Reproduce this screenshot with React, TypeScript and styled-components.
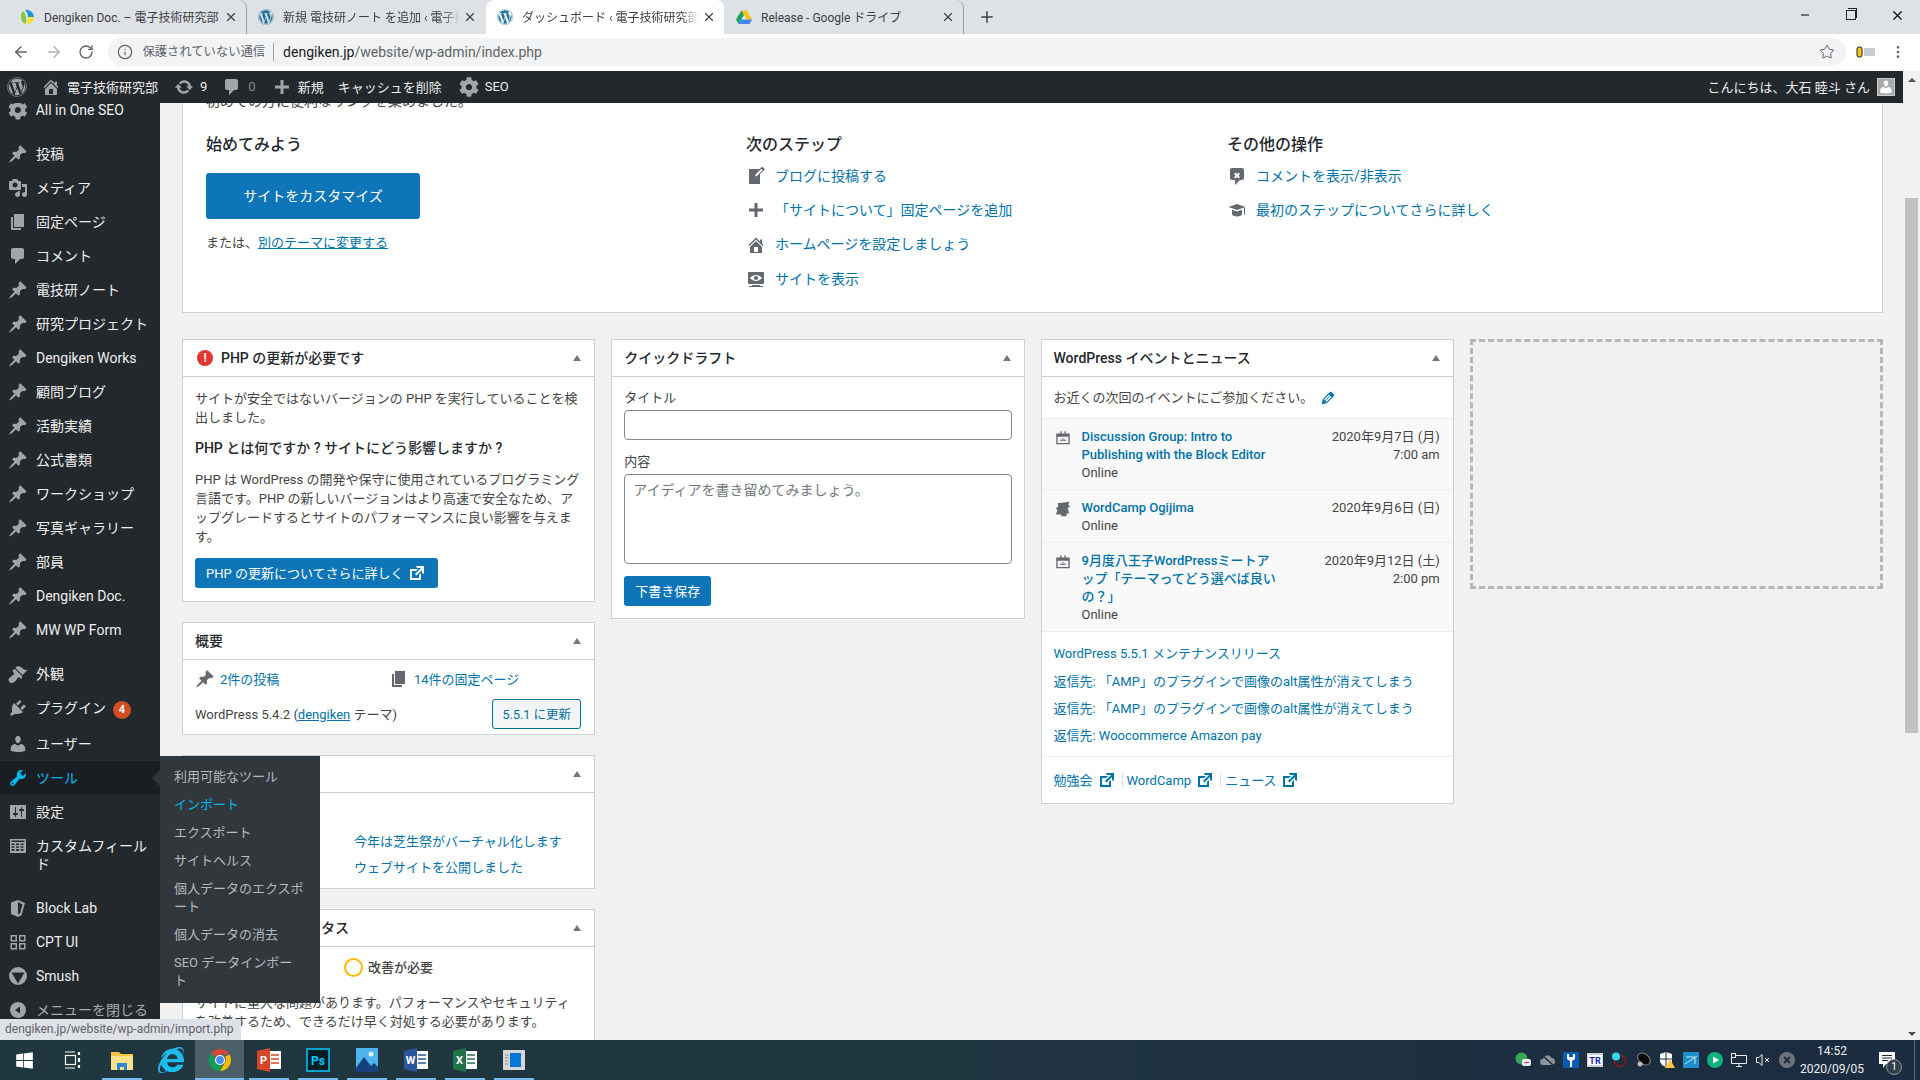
import React from "react";
import styled, { createGlobalStyle } from "styled-components";
import { ArrowLeft, ArrowRight, RotateCw, Star, Info, EllipsisVertical, Minus, X, Plus } from "lucide-react";
import { FaWordpress, FaCog, FaWindows, FaInternetExplorer } from "react-icons/fa";

const GlobalStyle = createGlobalStyle`
  html, body {
    margin: 0;
    padding: 0;
    height: 100%;
    overflow: hidden;
    background: #f1f1f1;
    font-family: Roboto, "Noto Sans CJK JP", sans-serif;
  }
  #root {
    height: 100%;
  }
  * {
    box-sizing: border-box;
  }
`;

const paths = {
  post: "M10.44 3.02l1.82-1.82 6.36 6.35-1.83 1.82c-1.05-.68-2.48-.57-3.41.36l-.75.75c-.92.93-1.04 2.35-.35 3.41l-1.83 1.82-2.41-2.41-2.8 2.79c-.42.42-3.38 2.71-3.8 2.29s1.86-3.39 2.28-3.81l2.79-2.79L4.1 9.36l1.83-1.82c1.05.69 2.48.57 3.41-.36l.75-.75c.93-.92 1.04-2.35.35-3.41z",
  media: "M13 11V4c0-.55-.45-1-1-1h-1.67L9 1H5L3.67 3H2c-.55 0-1 .45-1 1v7c0 .55.45 1 1 1h10c.55 0 1-.45 1-1zM7 4.5c1.38 0 2.5 1.12 2.5 2.5S8.38 9.5 7 9.5 4.5 8.38 4.5 7 5.62 4.5 7 4.5zM14 6h5v10.5c0 1.38-1.12 2.5-2.5 2.5S14 17.88 14 16.5s1.12-2.5 2.5-2.5c.17 0 .34.02.5.05V9h-3V6zm-4 8.05V13h2v3.5c0 1.38-1.12 2.5-2.5 2.5S7 17.88 7 16.5 8.12 14 9.5 14c.17 0 .34.02.5.05z",
  page: "M6 15V2h10v13H6zm-1 1h8v2H3V5h2v11z",
  comment: "M5 2h9c1.1 0 2 .9 2 2v7c0 1.1-.9 2-2 2h-2l-5 5v-5H5c-1.1 0-2-.9-2-2V4c0-1.1.9-2 2-2z",
  brush: "M14.48 11.06L7.41 3.99l1.5-1.5c.5-.56 2.3-.47 3.51.32 1.21.8 1.43 1.28 2.91 2.1 1.18.64 2.45 1.26 4.45.85zm-.71.71L6.7 4.7 4.93 6.47c-.39.39-.39 1.02 0 1.41l1.06 1.06c.39.39.39 1.03 0 1.42-.6.6-1.43 1.11-2.21 1.69-.35.26-.7.53-1.01.84C1.43 13.23.4 14.75.45 16.02c.05 1.27 1.75 2.96 3.02 3.01 1.27.05 2.79-.98 4.13-2.32.31-.31.58-.66.84-1.01.58-.78 1.09-1.61 1.69-2.21.39-.39 1.03-.39 1.42 0l1.06 1.06c.39.39 1.02.39 1.41 0z",
  plugin: "M13.11 4.36L9.87 7.6 8 5.73l3.24-3.24c.35-.34 1.05-.2 1.56.32.52.51.66 1.21.31 1.55zm-8 1.77l.91-1.12 9.01 9.01-1.19.84c-.71.71-2.63 1.16-3.82 1.16H6.14L4.9 17.26c-.59.59-1.54.59-2.12 0-.59-.58-.59-1.53 0-2.12l1.24-1.24v-3.88c0-1.13.4-3.19 1.09-3.89zm7.26 3.97l3.24-3.24c.34-.35 1.04-.21 1.55.31.52.51.66 1.21.31 1.55l-3.24 3.25z",
  users: "M10 9.25c-2.27 0-2.73-3.44-2.73-3.44C7 4.02 7.82 2 9.97 2c2.16 0 2.98 2.02 2.71 3.81 0 0-.41 3.44-2.68 3.44zm0 2.57L12.72 10c2.39 0 4.52 2.33 4.52 4.53v2.49s-3.65 1.13-7.24 1.13c-3.65 0-7.24-1.13-7.24-1.13v-2.49c0-2.25 1.94-4.48 4.47-4.48z",
  tools: "M16.68 9.77c-1.34 1.34-3.3 1.67-4.95.99l-5.41 6.52c-.99.99-2.59.99-3.58 0s-.99-2.59 0-3.57l6.52-5.42c-.68-1.65-.35-3.61.99-4.95 1.28-1.28 3.12-1.62 4.72-1.06l-2.89 2.89 2.82 2.82 2.86-2.87c.53 1.58.18 3.39-1.08 4.65zM3.81 16.21c.4.39 1.04.39 1.43 0 .4-.4.4-1.04 0-1.43-.39-.4-1.03-.4-1.43 0-.39.39-.39 1.03 0 1.43z",
  settings: "M18 16V4c0-.55-.45-1-1-1H3c-.55 0-1 .45-1 1v12c0 .55.45 1 1 1h14c.55 0 1-.45 1-1zM8 11h1c.55 0 1 .45 1 1s-.45 1-1 1H8v1.5c0 .28-.22.5-.5.5s-.5-.22-.5-.5V13H6c-.55 0-1-.45-1-1s.45-1 1-1h1V5.5c0-.28.22-.5.5-.5s.5.22.5.5V11zm5-2h-1c-.55 0-1-.45-1-1s.45-1 1-1h1V5.5c0-.28.22-.5.5-.5s.5.22.5.5V7h1c.55 0 1 .45 1 1s-.45 1-1 1h-1v5.5c0 .28-.22.5-.5.5s-.5-.22-.5-.5V9z",
  home: "M16 8.5l1.53 1.53-1.06 1.06L10 4.62l-6.47 6.47-1.06-1.06L10 2.5l4 4v-2h2v4zm-6-2.46l6 5.99V18H4v-5.97zM12 17v-5H8v5h4z",
  update: "M10.2 3.28c3.53 0 6.43 2.61 6.92 6h2.08l-3.5 4-3.5-4h2.32c-.45-1.97-2.21-3.45-4.32-3.45-1.45 0-2.73.71-3.54 1.78L4.95 5.66C6.23 4.2 8.11 3.28 10.2 3.28zm-.4 13.44c-3.52 0-6.43-2.61-6.92-6H.8l3.5-4c1.17 1.33 2.33 2.67 3.5 4H5.48c.45 1.97 2.21 3.45 4.32 3.45 1.45 0 2.73-.71 3.54-1.78l1.71 1.95c-1.28 1.46-3.15 2.38-5.25 2.38z",
  plus: "M17 8.5v3h-5.5V17h-3v-5.5H3v-3h5.5V3h3v5.5z",
  external: "M9 3h8v8l-2-1V6.92l-5.6 5.59-1.41-1.41L14.08 5H10zm3 12v-3l2-2v7H3V6h8L9 8H5v7h7z",
  edit: "M13.89 3.39l2.71 2.72c.46.46.42 1.24.03 1.64l-8.01 8.02-5.56 1.16 1.16-5.58s7.6-7.63 7.99-8.03c.39-.39 1.22-.39 1.68.07zm-2.73 2.79l-5.59 5.61 1.11 1.11 5.54-5.65zm-2.97 8.23l5.58-5.6-1.07-1.08-5.59 5.6z",
  write: "M16.89 1.2l1.41 1.41c.39.39.39 1.02 0 1.41L14 8.33V18H3V3h10.67l1.8-1.8c.4-.39 1.03-.4 1.42 0zm-5.66 8.48l5.37-5.36-1.42-1.42-5.36 5.37-.71 2.12z",
  view: "M18 14V4c0-.55-.45-1-1-1H3c-.55 0-1 .45-1 1v10c0 .55.45 1 1 1h14c.55 0 1-.45 1-1zm-8-8c2.3 0 4.4 1.14 6 3-1.6 1.86-3.7 3-6 3s-4.4-1.14-6-3c1.6-1.86 3.7-3 6-3zm2 3c0-1.1-.9-2-2-2s-2 .9-2 2 .9 2 2 2 2-.9 2-2zm2 8h3v1H3v-1h3v-1h8v1z",
  toggleComments: "M5 2h10c1.1 0 2 .9 2 2v8c0 1.1-.9 2-2 2h-2l-5 5v-5H5c-1.1 0-2-.9-2-2V4c0-1.1.9-2 2-2zm6.5 4.5L10 8 8.5 6.5 7 8l1.5 1.5L7 11l1.5 1.5L10 11l1.5 1.5L13 11l-1.5-1.5L13 8z",
  learn: "M10 10L1.5 7 10 4l8.5 3zM10 11.5l-5-1.8v4.3c0 1.2 2.2 2.5 5 2.5s5-1.3 5-2.5V9.7zM17 8v6.5h1V7.6z",
  table: "M2 3h16v14H2zm1.5 4.5V9h3V7.5zm0 2.8v1.5h3v-1.5zm0 2.8v1.6h3v-1.6zm4.5-5.6V9h3V7.5zm0 2.8v1.5h3v-1.5zm0 2.8v1.6h3v-1.6zm4.5-5.6V9h3V7.5zm0 2.8v1.5h3v-1.5zm0 2.8v1.6h3v-1.6zM3.5 4.5V6h13V4.5z",
  blocks: "M3 4.5L10 2l7 3-3.5 12.2L10 19l-7-3zM10 4v12.5l2-1 2.5-9z",
  cpt: "M2.5 3h6.5v6.5H2.5zm1.5 1.5V8h3.5V4.5zM11 3h6.5v6.5H11zm1.5 1.5V8h3.5V4.5zM2.5 11H9v6.5H2.5zm1.5 1.5V16h3.5v-3.5zM11 11h6.5v6.5H11zm1.5 1.5V16h3.5v-3.5z",
  smush: "M10 1a9 9 0 1 0 0 18 9 9 0 0 0 0-18zM3.5 6.5h13L10 17.5z",
  collapse: "M10 2a8 8 0 1 0 0 16 8 8 0 0 0 0-16zm2 4.5v7L7 10z",
  meetup: "M7 2.5h1.5V5h3V2.5H13V5h4.5v12h-15V5H7zM4 8.5v7h12v-7zm2.5 3.5h7v1h-7zm2-1.5h3v1h-3z",
  wordcamp: "M4 3.5l13-1.5-1 3.5 2 2-3 1.5 2 6H14v3H8v-2H2l2-5-2-1.5 3-2.5z",
};

type PathName = keyof typeof paths;

const Svg = styled.svg<{ $size?: number; $color?: string }>`
  width: ${(p) => p.$size ?? 20}px;
  height: ${(p) => p.$size ?? 20}px;
  flex: none;
  fill: ${(p) => p.$color ?? "currentColor"};
`;

const Dash = ({ name, size, color }: { name: PathName; size?: number; color?: string }) => (
  <Svg viewBox="0 0 20 20" $size={size} $color={color}>
    <path d={paths[name]} fillRule="evenodd" />
  </Svg>
);

/* ---------- browser chrome ---------- */

const Page = styled.div`
  height: 100%;
  display: flex;
  flex-direction: column;
`;
const TabBar = styled.div`
  height: 34px;
  background: #dee1e6;
  display: flex;
  align-items: stretch;
  padding-left: 8px;
  flex: none;
`;
const Tab = styled.div<{ $active?: boolean; $divider?: boolean }>`
  width: 239px;
  display: flex;
  align-items: center;
  padding: 0 8px 0 11px;
  gap: 9px;
  font-size: 12px;
  color: #3c4043;
  border-radius: 8px 8px 0 0;
  background: ${(p) => (p.$active ? "#fff" : "transparent")};
  border-right: 1px solid ${(p) => (p.$divider ? "#9aa0a6" : "transparent")};
  background-clip: padding-box;
`;
const TabTitle = styled.span<{ $fade?: boolean }>`
  flex: 1;
  white-space: nowrap;
  overflow: hidden;
  margin-bottom: 2px;
  ${(p) => p.$fade && "-webkit-mask-image: linear-gradient(to right, #000 90%, transparent);"}
`;
const TabClose = styled(X).attrs({ size: 14, strokeWidth: 2 })`
  flex: none;
  margin-left: -6px;
  color: #3c4043;
`;
const Favicon = styled.span`
  width: 16px;
  height: 16px;
  flex: none;
  display: flex;
  color: #21759b;
`;
const NewTab = styled.div`
  width: 46px;
  display: flex;
  align-items: center;
  justify-content: center;
  color: #3c4043;
`;
const WindowControls = styled.div`
  margin-left: auto;
  display: flex;
  align-items: center;
  color: #000;
  height: 100%;
`;
const WindowButton = styled.div`
  width: 46px;
  display: flex;
  justify-content: center;
  padding-bottom: 4px;
`;
const RestoreIcon = styled.span`
  width: 10px;
  height: 10px;
  border: 1px solid #202124;
  position: relative;
  &::before {
    content: "";
    position: absolute;
    left: 1px;
    top: -3px;
    width: 8px;
    height: 9px;
    border: 1px solid #202124;
    border-left: 0;
    border-bottom: 0;
  }
`;
const Toolbar = styled.div`
  height: 37px;
  background: #fff;
  display: flex;
  align-items: center;
  padding: 0 6px 2px 5px;
  flex: none;
`;
const NavButton = styled.div<{ $muted?: boolean }>`
  width: 32.5px;
  display: flex;
  justify-content: center;
  color: ${(p) => (p.$muted ? "#b0b3b8" : "#5f6368")};
`;
const Omnibox = styled.div`
  flex: 1;
  height: 28px;
  margin-left: 5px;
  background: #f1f3f4;
  border-radius: 14px;
  display: flex;
  align-items: center;
  padding: 0 11px 0 9px;
  font-size: 14px;
  color: #5f6368;
`;
const SecurityLabel = styled.span`
  margin-left: 10px;
  font-size: 12.3px;
  padding-right: 8px;
  border-right: 1px solid #9aa0a6;
  line-height: 18px;
`;
const UrlHost = styled.span`
  margin-left: 9px;
  color: #202124;
`;
const UrlPath = styled.span`
  color: #5f6368;
`;
const BookmarkStar = styled(Star).attrs({ size: 16, strokeWidth: 1.5 })`
  margin-left: auto;
  color: #5f6368;
`;
const ExtensionIcon = styled.div`
  width: 36px;
  padding-left: 4px;
  display: flex;
  justify-content: center;
`;

/* ---------- wp admin bar ---------- */

const Middle = styled.div`
  flex: 1;
  min-height: 0;
  display: flex;
  position: relative;
`;
const Main = styled.div`
  flex: 1;
  min-width: 0;
  display: flex;
  flex-direction: column;
`;
const AdminBar = styled.div`
  height: 32px;
  flex: none;
  background: #23282d;
  color: #eee;
  font-size: 13px;
  display: flex;
  align-items: center;
`;
const BarItem = styled.div<{ $shift?: number }>`
  display: flex;
  align-items: center;
  gap: 6px;
  padding: 0 7px 2px;
  margin-left: ${(p) => p.$shift ?? 0}px;
  height: 100%;
  white-space: nowrap;
  svg {
    color: #a0a5aa;
    margin-bottom: -2px;
  }
`;
const BarCount = styled.span<{ $dim?: boolean }>`
  color: ${(p) => (p.$dim ? "#82878c" : "#eee")};
`;
const BarRight = styled(BarItem)`
  margin-left: auto;
  padding-right: 8px;
  gap: 7px;
`;
const Avatar = styled.span`
  width: 18px;
  height: 18px;
  background: #a9a9a9;
  border: 1px solid #ccc;
  display: flex;
  margin-bottom: -2px;
  svg {
    color: #fff;
    margin: 0;
  }
`;

/* ---------- sidebar ---------- */

const Body = styled.div`
  flex: 1;
  min-height: 0;
  display: flex;
  overflow: hidden;
`;
const Sidebar = styled.nav`
  width: 160px;
  flex: none;
  background: #23282d;
  color: #eee;
  font-size: 14px;
  line-height: 18px;
  position: relative;
  z-index: 2;
`;
const Menu = styled.ul`
  list-style: none;
  margin: -10px 0 0;
  padding: 0;
`;
const MenuItem = styled.li<{ $current?: boolean; $dim?: boolean; $gap?: boolean }>`
  position: relative;
  display: flex;
  gap: 8px;
  padding: 8px 10px 8px 8px;
  margin-top: ${(p) => (p.$gap ? "10px" : "0")};
  background: ${(p) => (p.$current ? "#191e23" : "transparent")};
  color: ${(p) => (p.$current ? "#00b9eb" : p.$dim ? "#aaa" : "#eee")};
  > svg {
    color: ${(p) => (p.$current ? "#00b9eb" : "#a0a5aa")};
    margin: -1px 0;
  }
`;
const MenuLabel = styled.span`
  width: 116px;
  word-break: break-all;
`;
const Badge = styled.span`
  display: inline-block;
  width: 18px;
  height: 18px;
  border-radius: 50%;
  background: #d54e21;
  color: #fff;
  font-size: 11px;
  font-weight: 600;
  line-height: 18px;
  text-align: center;
  margin-left: 7px;
`;
const Flyout = styled.ul`
  position: absolute;
  left: 160px;
  top: -5px;
  width: 160px;
  margin: 0;
  padding: 7px 0 8px;
  list-style: none;
  background: #32373c;
  font-size: 13px;
  line-height: 18px;
  color: #b4b9be;
  &::before {
    content: "";
    position: absolute;
    left: -8px;
    top: 14px;
    border: 8px solid transparent;
    border-left: 0;
    border-right-color: #32373c;
  }
`;
const FlyoutItem = styled.li<{ $current?: boolean }>`
  padding: 5px 16px 5px 14px;
  color: ${(p) => (p.$current ? "#00b9eb" : "#b4b9be")};
`;

/* ---------- content ---------- */

const Content = styled.main`
  flex: 1;
  min-width: 0;
  padding: 0 20px 0 22px;
  color: #444;
  font-size: 13px;
  line-height: 19px;
`;
const WelcomePanel = styled.section`
  margin-top: -39px;
  background: #fff;
  border: 1px solid #ccd0d4;
  padding: 27px 23px 16px;
`;
const WelcomeIntro = styled.p`
  margin: 0 0 23px;
  font-size: 14px;
  line-height: 18px;
  color: #444;
`;
const WelcomeColumns = styled.div`
  display: grid;
  grid-template-columns: 540px 481px 1fr;
`;
const WelcomeTitle = styled.h3`
  margin: 0;
  font-size: 16px;
  font-weight: 500;
  line-height: 24px;
  color: #23282d;
`;
const HeroButton = styled.div`
  margin-top: 16px;
  width: 214px;
  height: 46px;
  background: #0e76b8;
  border-radius: 3px;
  color: #fff;
  font-size: 14px;
  display: flex;
  align-items: center;
  justify-content: center;
`;
const AltTheme = styled.p`
  margin: 15px 0 0;
  line-height: 18px;
`;
const TextLink = styled.a<{ $under?: boolean }>`
  color: #0073aa;
  text-decoration: ${(p) => (p.$under ? "underline" : "none")};
`;
const StepList = styled.ul`
  list-style: none;
  margin: 2px 0 0;
  padding: 0;
`;
const StepItem = styled.li`
  height: 34.3px;
  display: flex;
  align-items: center;
  gap: 9px;
  font-size: 14px;
  color: #0073aa;
  svg {
    color: #646970;
  }
`;
const WidgetGrid = styled.div`
  margin-top: 26px;
  display: grid;
  grid-template-columns: repeat(4, 1fr);
  gap: 16px;
  align-items: start;
`;
const WidgetStack = styled.div`
  display: flex;
  flex-direction: column;
  gap: 20px;
`;
const Widget = styled.section`
  background: #fff;
  border: 1px solid #ccd0d4;
`;
const WidgetHeader = styled.header`
  height: 37px;
  border-bottom: 1px solid #ccd0d4;
  display: flex;
  align-items: center;
  padding: 0 13px 0 12px;
  gap: 8px;
`;
const WidgetTitle = styled.h2`
  margin: 0;
  flex: 1;
  font-size: 14px;
  font-weight: 500;
  line-height: 19px;
  color: #23282d;
`;
const Collapse = styled.span`
  width: 0;
  height: 0;
  border: 4px solid transparent;
  border-top: 0;
  border-bottom: 6px solid #72777c;
`;
const AlertDot = styled.span`
  width: 16px;
  height: 16px;
  margin-left: 2px;
  border-radius: 50%;
  background: #e3342f;
  color: #fff;
  font-size: 12px;
  font-weight: 700;
  line-height: 16px;
  text-align: center;
`;
const WidgetBody = styled.div`
  padding: 12px 12px 13px;
`;
const HealthBody = styled.div`
  padding: 7px 12px 13px;
`;
const Para = styled.p`
  margin: 0 0 12px;
`;
const SubTitle = styled.h3`
  margin: 0 0 12px;
  font-size: 14px;
  font-weight: 500;
  line-height: 19px;
  color: #23282d;
`;
const PrimaryButton = styled.div`
  display: inline-flex;
  align-items: center;
  gap: 3px;
  height: 30px;
  padding: 0 11px;
  background: #0e76b8;
  border-radius: 3px;
  color: #fff;
`;
const GlanceGrid = styled.div`
  display: grid;
  grid-template-columns: 194px 1fr;
  padding: 9px 12px 0;
`;
const GlanceItem = styled.div`
  display: flex;
  align-items: center;
  gap: 5px;
  color: #0073aa;
  svg {
    color: #646970;
  }
`;
const VersionRow = styled.div`
  display: flex;
  align-items: center;
  justify-content: space-between;
  padding: 10px 4px 5px 12px;
  margin-right: 9px;
`;
const OutlineButton = styled.div`
  width: 89px;
  height: 30px;
  border: 1px solid #0071a1;
  border-radius: 3px;
  background: #f3f5f6;
  color: #0071a1;
  display: flex;
  align-items: center;
  justify-content: center;
  font-size: 12.5px;
`;
const ActivityBody = styled.div`
  padding: 9px 12px 8px;
`;
const ActivityHeading = styled.div`
  line-height: 20px;
  margin-bottom: 6px;
`;
const ActivityRow = styled.div`
  display: grid;
  grid-template-columns: 159px 1fr;
  height: 26px;
  align-items: center;
`;
const HealthRow = styled.div`
  display: flex;
  justify-content: center;
  align-items: center;
  gap: 5px;
  height: 26px;
  color: #444;
  font-weight: 500;
  margin: 0 0 13px 0;
`;
const HealthRing = styled.span`
  width: 19px;
  height: 19px;
  border-radius: 50%;
  border: 2px solid #ffb900;
`;
const FieldLabel = styled.label`
  display: block;
  line-height: 19px;
`;
const TitleInput = styled.div`
  height: 30px;
  margin: 3px 0 12px;
  border: 1px solid #7e8993;
  border-radius: 4px;
  background: #fff;
`;
const DraftArea = styled.div`
  height: 90px;
  margin: 3px 0 12px;
  padding: 6px 8px;
  border: 1px solid #7e8993;
  border-radius: 4px;
  font-size: 14px;
  color: #72777c;
`;
const DraftBody = styled.div`
  padding: 11px 12px 12px;
`;
const Location = styled.div`
  height: 42px;
  display: flex;
  align-items: center;
  gap: 6px;
  padding-left: 12px;
  border-bottom: 1px solid #eee;
`;
const EventRow = styled.div`
  display: flex;
  padding: 9px 13px 7px 12px;
  background: #f9f9f9;
  border-bottom: 1px solid #eee;
  line-height: 18px;
  svg {
    color: #646970;
    margin: 1px 10px 0 0;
  }
`;
const EventText = styled.div`
  width: 198px;
  flex: none;
  color: #444;
`;
const EventTitle = styled.a`
  display: block;
  color: #0073aa;
  font-weight: 500;
`;
const EventDate = styled.div`
  flex: 1;
  text-align: right;
  white-space: nowrap;
`;
const NewsList = styled.ul`
  list-style: none;
  margin: 0;
  padding: 8px 12px 7px;
  border-bottom: 1px solid #eee;
  color: #0073aa;
`;
const NewsItem = styled.li`
  height: 27.3px;
  display: flex;
  align-items: center;
`;
const EventFooter = styled.div`
  height: 46px;
  padding-left: 12px;
  display: flex;
  align-items: center;
  color: #0073aa;
`;
const FooterLink = styled.span`
  display: flex;
  align-items: center;
  gap: 4px;
`;
const FooterDivider = styled.span`
  width: 1px;
  height: 14px;
  background: #ddd;
  margin: 0 4px 0 5px;
`;
const DropZone = styled.div`
  height: 250px;
  border: 3px dashed #b4b9be;
`;

/* ---------- scrollbar, status bubble ---------- */

const ScrollTrack = styled.div`
  width: 17px;
  flex: none;
  background: #f1f1f1;
  display: flex;
  flex-direction: column;
  align-items: center;
  justify-content: space-between;
  padding: 7px 0 4px;
`;
const ScrollArrow = styled.span<{ $down?: boolean }>`
  width: 0;
  height: 0;
  border: 4px solid transparent;
  ${(p) => (p.$down ? "border-bottom: 0; border-top: 4px solid #505050;" : "border-top: 0; border-bottom: 4px solid #505050;")}
`;
const ScrollThumb = styled.div`
  width: 13px;
  height: 535px;
  background: #c1c1c1;
  margin: 116px 0 auto;
`;
const StatusBubble = styled.div`
  position: absolute;
  left: 0;
  bottom: 0;
  z-index: 5;
  height: 21px;
  padding: 0 7px 0 5px;
  background: #dee1e6;
  border-top-right-radius: 2px;
  color: #5f6368;
  font-size: 12px;
  line-height: 21px;
`;

/* ---------- taskbar ---------- */

const Taskbar = styled.footer`
  height: 40px;
  flex: none;
  background: linear-gradient(to right, #20373f, #1f3540 50%, #1b2b40);
  display: flex;
  align-items: stretch;
  color: #fff;
`;
const StartCell = styled.div`
  width: 48.5px;
  display: flex;
  align-items: center;
  justify-content: center;
`;
const AppCell = styled.div<{ $active?: boolean; $open?: boolean }>`
  width: 49px;
  display: flex;
  align-items: center;
  justify-content: center;
  position: relative;
  background: ${(p) => (p.$active ? "#4a5f66" : "transparent")};
  &::after {
    content: "";
    display: ${(p) => (p.$open ? "block" : "none")};
    position: absolute;
    bottom: 0;
    left: ${(p) => (p.$active ? "0" : "5px")};
    right: ${(p) => (p.$active ? "0" : "4px")};
    height: 2px;
    background: #76b9ed;
  }
`;
const Tray = styled.div`
  margin-left: auto;
  display: flex;
  align-items: center;
  padding-right: 5px;
`;
const TrayCell = styled.div`
  width: 24px;
  display: flex;
  justify-content: center;
  color: #ddd;
`;
const Clock = styled.div`
  width: 66px;
  text-align: center;
  font-size: 12px;
  line-height: 18px;
  color: #eee;
`;
const Notify = styled.div`
  width: 50px;
  padding-right: 6px;
  display: flex;
  justify-content: center;
  border-right: 1px solid #5a6a78;
  height: 100%;
  align-items: center;
  position: relative;
`;
const NotifyBadge = styled.span`
  position: absolute;
  left: 21px;
  top: 19px;
  width: 16px;
  height: 16px;
  border-radius: 50%;
  background: #33404c;
  border: 1px solid #8a939b;
  font-size: 10px;
  line-height: 14px;
  text-align: center;
`;

/* ---------- drawn logos ---------- */

const DocFavicon = () => (
  <svg viewBox="0 0 16 16" width="16" height="16">
    <path d="M6 1a7.5 7.5 0 0 1 9 7H9C9 5 8 3 6 1z" fill="#1b9ad6" />
    <path d="M9 8h6a7.5 7.5 0 0 1-8 7.5C9 13 9.5 10.5 9 8z" fill="#f5e13a" />
    <path d="M4 2C1 5 1 12 6 15c1-1 2-3 1-7-.5-2-1.5-4.5-3-6z" fill="#8cc63f" />
  </svg>
);
const DriveFavicon = () => (
  <svg viewBox="0 0 16 16" width="16" height="16">
    <path d="M5.5 1.5h5L16 10.5h-5z" fill="#ffc107" />
    <path d="M5.5 1.5L0 10.5 2.5 15l5.5-9z" fill="#1ea362" />
    <path d="M2.5 15h11l2.5-4.5H5z" fill="#4285f4" />
  </svg>
);
const ChromeLogo = () => (
  <svg viewBox="0 0 24 24" width="24" height="24">
    <path d="M12 1a11 11 0 0 1 9.5 5.5H12a5.5 5.5 0 0 0-5 3.2L3.5 4.7A11 11 0 0 1 12 1z" fill="#db4437" />
    <path d="M21.5 6.5A11 11 0 0 1 12 23l4.7-8.2A5.5 5.5 0 0 0 17 8.5z" fill="#fbbc05" />
    <path d="M12 23A11 11 0 0 1 3.5 4.7L8 12.8a5.5 5.5 0 0 0 6.2 2.9z" fill="#0f9d58" />
    <circle cx="12" cy="12" r="4.5" fill="#4a8cf0" stroke="#fff" strokeWidth="1.2" />
  </svg>
);
const FolderLogo = () => (
  <svg viewBox="0 0 24 24" width="24" height="24">
    <path d="M1 4h8l2 2h12v16H1z" fill="#f4c542" />
    <path d="M1 8h22v14H1z" fill="#fbe08a" />
    <path d="M7 15h10v7h-3v-3h-4v3H7z" fill="#2b88d8" />
  </svg>
);
const OfficeLogo = ({ letter, dark }: { letter: string; dark: string }) => (
  <svg viewBox="0 0 24 24" width="24" height="24">
    <rect x="10" y="3" width="14" height="18" fill="#fff" />
    <path d="M14 7h8M14 11h8M14 15h8" stroke={dark} strokeWidth="1.5" />
    <path d="M0 3l13-3v24L0 21z" fill={dark} />
    <text x="6.5" y="16" textAnchor="middle" fontSize="11" fontWeight="700" fill="#fff" fontFamily="Roboto">
      {letter}
    </text>
  </svg>
);
const PsLogo = () => (
  <svg viewBox="0 0 24 24" width="24" height="24">
    <rect x="1" y="1" width="22" height="22" fill="#001d26" stroke="#00c8ff" strokeWidth="1.5" />
    <text x="12" y="17" textAnchor="middle" fontSize="12" fontWeight="700" fill="#00c8ff" fontFamily="Roboto">
      Ps
    </text>
  </svg>
);
const PhotosLogo = () => (
  <svg viewBox="0 0 24 24" width="24" height="24">
    <rect x="1" y="0" width="22" height="24" fill="#4fb3ee" />
    <circle cx="16" cy="6" r="2.5" fill="#d9f1ff" />
    <path d="M1 20l8-11 7 9 3-3 4 4v5H1z" fill="#16407e" />
  </svg>
);
const PanelLogo = () => (
  <svg viewBox="0 0 24 24" width="24" height="24">
    <rect x="1" y="2" width="22" height="20" fill="#d6d6d6" />
    <rect x="8" y="5" width="11" height="14" fill="#0078d7" />
    <path d="M3 7h3M3 10h3M3 13h3M3 16h3" stroke="#8a8a8a" />
  </svg>
);
const TaskView = () => (
  <svg viewBox="0 0 20 20" width="20" height="20" fill="none" stroke="#fff" strokeWidth="1.2">
    <path d="M2 2h10M2 18h10" />
    <rect x="2.5" y="5.5" width="10" height="9" />
    <path d="M16 2v3M16 8v4M16 15v3" strokeWidth="2.2" />
  </svg>
);

const TrayIcons = [
  <svg key="globe" viewBox="0 0 16 16" width="16" height="16"><circle cx="6.5" cy="6.5" r="6" fill="#3aa655" /><rect x="7" y="7" width="9" height="7" rx="2" fill="#e8eef5" /><path d="M9 10.5h5" stroke="#e04040" /></svg>,
  <svg key="cloud" viewBox="0 0 16 16" width="16" height="16"><path d="M4 13a3 3 0 0 1 0-6 4.5 4.5 0 0 1 8.5-1A3.5 3.5 0 0 1 12.5 13z" fill="#8c939a" /><path d="M3 3l11 10" stroke="#1b2b40" strokeWidth="1.5" /></svg>,
  <svg key="tool" viewBox="0 0 16 16" width="16" height="16"><rect width="16" height="16" fill="#0a5bb5" /><path d="M4 2v5l3 2v6h2V9l3-2V2h-2v3H6V2z" fill="#fff" /></svg>,
  <svg key="tr" viewBox="0 0 16 16" width="16" height="16"><rect width="16" height="14" y="1" fill="#d0d0d0" /><rect x="1" y="3" width="14" height="10" fill="#fff" /><text x="8" y="11.5" textAnchor="middle" fontSize="9" fontWeight="700" fill="#1420c8" fontFamily="Roboto">TR</text></svg>,
  <svg key="pair" viewBox="0 0 16 16" width="16" height="16"><circle cx="9" cy="9" r="5.5" fill="none" stroke="#8f1616" strokeWidth="1.5" /><circle cx="5" cy="4.5" r="4" fill="#35d6e8" /></svg>,
  <svg key="dish" viewBox="0 0 16 16" width="16" height="16"><ellipse cx="9" cy="7" rx="7" ry="5" transform="rotate(40 9 7)" fill="#0a0a0a" stroke="#888" /><circle cx="5" cy="12" r="2.5" fill="#bbb" /></svg>,
  <svg key="shield" viewBox="0 0 16 16" width="16" height="16"><path d="M7 0l6 2v6c0 4-3 6-6 7-3-1-6-3-6-7V2z" fill="#fff" /><path d="M7 0v15M1 7h12" stroke="#1b2b40" /><path d="M11 7l5 9H6z" fill="#ffc83d" /></svg>,
  <svg key="panel" viewBox="0 0 16 16" width="16" height="16"><rect width="16" height="16" rx="1" fill="#1f8fc7" /><path d="M2 12L14 4M3 5h9v7" stroke="#bfe6f5" fill="none" /></svg>,
  <svg key="play" viewBox="0 0 16 16" width="16" height="16"><circle cx="8" cy="8" r="8" fill="#10b27c" /><path d="M6 4.5L12 8l-6 3.5z" fill="#fff" /></svg>,
  <svg key="net" viewBox="0 0 16 16" width="16" height="16" fill="none" stroke="#eee"><rect x=".5" y="1.5" width="4" height="4" /><path d="M4.5 3.5H15.5V11.5H.5V5.5M8 11.5v3M5 14.5h6" /></svg>,
  <svg key="mute" viewBox="0 0 16 16" width="16" height="16" fill="none" stroke="#eee"><path d="M1.5 5.5H4l3-3v11l-3-3H1.5zM10 6l4 4M14 6l-4 4" /></svg>,
  <svg key="off" viewBox="0 0 16 16" width="16" height="16"><circle cx="8" cy="8" r="8" fill="#6d737a" /><path d="M5 5l6 6M11 5l-6 6" stroke="#1b2b40" strokeWidth="2" /></svg>,
];

/* ---------- data ---------- */

const menuTop: { icon: PathName; label: string; gap?: boolean }[] = [
  { icon: "post", label: "投稿", gap: true },
  { icon: "media", label: "メディア" },
  { icon: "page", label: "固定ページ" },
  { icon: "comment", label: "コメント" },
  { icon: "post", label: "電技研ノート" },
  { icon: "post", label: "研究プロジェクト" },
  { icon: "post", label: "Dengiken Works" },
  { icon: "post", label: "顧問ブログ" },
  { icon: "post", label: "活動実績" },
  { icon: "post", label: "公式書類" },
  { icon: "post", label: "ワークショップ" },
  { icon: "post", label: "写真ギャラリー" },
  { icon: "post", label: "部員" },
  { icon: "post", label: "Dengiken Doc." },
  { icon: "post", label: "MW WP Form" },
];

const flyoutItems = [
  "利用可能なツール",
  "インポート",
  "エクスポート",
  "サイトヘルス",
  "個人データのエクスポート",
  "個人データの消去",
  "SEO データインポート",
];

const nextSteps: { icon: PathName; label: string }[] = [
  { icon: "write", label: "ブログに投稿する" },
  { icon: "plus", label: "「サイトについて」固定ページを追加" },
  { icon: "home", label: "ホームページを設定しましょう" },
  { icon: "view", label: "サイトを表示" },
];

const moreActions: { icon: PathName; label: string }[] = [
  { icon: "toggleComments", label: "コメントを表示/非表示" },
  { icon: "learn", label: "最初のステップについてさらに詳しく" },
];

const events: { icon: PathName; title: string; date: string; time?: string }[] = [
  { icon: "meetup", title: "Discussion Group: Intro to Publishing with the Block Editor", date: "2020年9月7日 (月)", time: "7:00 am" },
  { icon: "wordcamp", title: "WordCamp Ogijima", date: "2020年9月6日 (日)" },
  { icon: "meetup", title: "9月度八王子WordPressミートアップ「テーマってどう選べば良いの？」", date: "2020年9月12日 (土)", time: "2:00 pm" },
];

const news = [
  "WordPress 5.5.1 メンテナンスリリース",
  "返信先: 「AMP」のプラグインで画像のalt属性が消えてしまう",
  "返信先: 「AMP」のプラグインで画像のalt属性が消えてしまう",
  "返信先: Woocommerce Amazon pay",
];

const App = () => {
  return (
    <Page>
      <GlobalStyle />
      <TabBar>
        <Tab $divider>
          <Favicon><DocFavicon /></Favicon>
          <TabTitle>Dengiken Doc. – 電子技術研究部</TabTitle>
          <TabClose />
        </Tab>
        <Tab>
          <Favicon><FaWordpress size={16} /></Favicon>
          <TabTitle $fade>新規 電技研ノート を追加 ‹ 電子技術研究部</TabTitle>
          <TabClose />
        </Tab>
        <Tab $active>
          <Favicon><FaWordpress size={16} /></Favicon>
          <TabTitle $fade>ダッシュボード ‹ 電子技術研究部 — WordPress</TabTitle>
          <TabClose />
        </Tab>
        <Tab $divider>
          <Favicon><DriveFavicon /></Favicon>
          <TabTitle>Release - Google ドライブ</TabTitle>
          <TabClose />
        </Tab>
        <NewTab><Plus size={18} strokeWidth={2} /></NewTab>
        <WindowControls>
          <WindowButton><Minus size={12} strokeWidth={2.4} /></WindowButton>
          <WindowButton><RestoreIcon /></WindowButton>
          <WindowButton><X size={15} strokeWidth={1.8} /></WindowButton>
        </WindowControls>
      </TabBar>

      <Toolbar>
        <NavButton><ArrowLeft size={18} strokeWidth={2} /></NavButton>
        <NavButton $muted><ArrowRight size={18} strokeWidth={2} /></NavButton>
        <NavButton><RotateCw size={16} strokeWidth={2} /></NavButton>
        <Omnibox>
          <Info size={16} strokeWidth={1.8} />
          <SecurityLabel>保護されていない通信</SecurityLabel>
          <UrlHost>
            dengiken.jp<UrlPath>/website/wp-admin/index.php</UrlPath>
          </UrlHost>
          <BookmarkStar />
        </Omnibox>
        <ExtensionIcon>
          <svg viewBox="0 0 20 12" width="20" height="12">
            <rect x="1" y="1" width="5" height="10" rx="2" fill="#f5c518" stroke="#222" />
            <rect x="8" y="2" width="11" height="8" fill="#c6cdd3" />
          </svg>
        </ExtensionIcon>
        <NavButton><EllipsisVertical size={16} /></NavButton>
      </Toolbar>

      <Middle>
        <Main>
          <AdminBar>
            <BarItem><FaWordpress size={20} /></BarItem>
            <BarItem><Dash name="home" />電子技術研究部</BarItem>
            <BarItem $shift={2}><Dash name="update" /><BarCount>9</BarCount></BarItem>
            <BarItem $shift={1}><Dash name="comment" /><BarCount $dim>0</BarCount></BarItem>
            <BarItem $shift={2}><Dash name="plus" />新規</BarItem>
            <BarItem>キャッシュを削除</BarItem>
            <BarItem $shift={3}><FaCog size={20} />SEO</BarItem>
            <BarRight>
              こんにちは、大石 睦斗 さん
              <Avatar><Dash name="users" size={16} /></Avatar>
            </BarRight>
          </AdminBar>

          <Body>
            <Sidebar>
              <Menu>
                <MenuItem>
                  <FaCog size={20} />
                  <MenuLabel>All in One SEO</MenuLabel>
                </MenuItem>
                {menuTop.map((item) => (
                  <MenuItem key={item.label} $gap={item.gap}>
                    <Dash name={item.icon} />
                    <MenuLabel>{item.label}</MenuLabel>
                  </MenuItem>
                ))}
                <MenuItem $gap>
                  <Dash name="brush" />
                  <MenuLabel>外観</MenuLabel>
                </MenuItem>
                <MenuItem>
                  <Dash name="plugin" />
                  <MenuLabel>プラグイン<Badge>4</Badge></MenuLabel>
                </MenuItem>
                <MenuItem>
                  <Dash name="users" />
                  <MenuLabel>ユーザー</MenuLabel>
                </MenuItem>
                <MenuItem $current>
                  <Dash name="tools" />
                  <MenuLabel>ツール</MenuLabel>
                  <Flyout>
                    {flyoutItems.map((label) => (
                      <FlyoutItem key={label} $current={label === "インポート"}>{label}</FlyoutItem>
                    ))}
                  </Flyout>
                </MenuItem>
                <MenuItem>
                  <Dash name="settings" />
                  <MenuLabel>設定</MenuLabel>
                </MenuItem>
                <MenuItem>
                  <Dash name="table" />
                  <MenuLabel>カスタムフィールド</MenuLabel>
                </MenuItem>
                <MenuItem $gap>
                  <Dash name="blocks" />
                  <MenuLabel>Block Lab</MenuLabel>
                </MenuItem>
                <MenuItem>
                  <Dash name="cpt" />
                  <MenuLabel>CPT UI</MenuLabel>
                </MenuItem>
                <MenuItem>
                  <Dash name="smush" />
                  <MenuLabel>Smush</MenuLabel>
                </MenuItem>
                <MenuItem $dim>
                  <Dash name="collapse" />
                  <MenuLabel>メニューを閉じる</MenuLabel>
                </MenuItem>
              </Menu>
            </Sidebar>

            <Content>
              <WelcomePanel>
                <WelcomeIntro>初めての方に便利なリンクを集めました。</WelcomeIntro>
                <WelcomeColumns>
                  <div>
                    <WelcomeTitle>始めてみよう</WelcomeTitle>
                    <HeroButton>サイトをカスタマイズ</HeroButton>
                    <AltTheme>または、<TextLink $under>別のテーマに変更する</TextLink></AltTheme>
                  </div>
                  <div>
                    <WelcomeTitle>次のステップ</WelcomeTitle>
                    <StepList>
                      {nextSteps.map((s) => (
                        <StepItem key={s.label}><Dash name={s.icon} />{s.label}</StepItem>
                      ))}
                    </StepList>
                  </div>
                  <div>
                    <WelcomeTitle>その他の操作</WelcomeTitle>
                    <StepList>
                      {moreActions.map((s) => (
                        <StepItem key={s.label}><Dash name={s.icon} />{s.label}</StepItem>
                      ))}
                    </StepList>
                  </div>
                </WelcomeColumns>
              </WelcomePanel>

              <WidgetGrid>
                <WidgetStack>
                  <Widget>
                    <WidgetHeader>
                      <AlertDot>!</AlertDot>
                      <WidgetTitle>PHP の更新が必要です</WidgetTitle>
                      <Collapse />
                    </WidgetHeader>
                    <WidgetBody>
                      <Para>サイトが安全ではないバージョンの PHP を実行していることを検出しました。</Para>
                      <SubTitle>PHP とは何ですか ? サイトにどう影響しますか ?</SubTitle>
                      <Para>PHP は WordPress の開発や保守に使用されているプログラミング言語です。PHP の新しいバージョンはより高速で安全なため、アップグレードするとサイトのパフォーマンスに良い影響を与えます。</Para>
                      <PrimaryButton>PHP の更新についてさらに詳しく <Dash name="external" size={20} /></PrimaryButton>
                    </WidgetBody>
                  </Widget>

                  <Widget>
                    <WidgetHeader>
                      <WidgetTitle>概要</WidgetTitle>
                      <Collapse />
                    </WidgetHeader>
                    <GlanceGrid>
                      <GlanceItem><Dash name="post" />2件の投稿</GlanceItem>
                      <GlanceItem><Dash name="page" />14件の固定ページ</GlanceItem>
                    </GlanceGrid>
                    <VersionRow>
                      <span>WordPress 5.4.2 (<TextLink $under>dengiken</TextLink> テーマ)</span>
                      <OutlineButton>5.5.1 に更新</OutlineButton>
                    </VersionRow>
                  </Widget>

                  <Widget>
                    <WidgetHeader>
                      <WidgetTitle>アクティビティ</WidgetTitle>
                      <Collapse />
                    </WidgetHeader>
                    <ActivityBody>
                      <ActivityHeading>最近公開</ActivityHeading>
                      <ActivityRow><span>8月25日 10:00 AM</span><TextLink>今年は芝生祭がバーチャル化します</TextLink></ActivityRow>
                      <ActivityRow><span>8月10日 9:00 AM</span><TextLink>ウェブサイトを公開しました</TextLink></ActivityRow>
                    </ActivityBody>
                  </Widget>

                  <Widget>
                    <WidgetHeader>
                      <WidgetTitle>サイトヘルスステータス</WidgetTitle>
                      <Collapse />
                    </WidgetHeader>
                    <HealthBody>
                      <HealthRow><HealthRing />改善が必要</HealthRow>
                      サイトに重大な問題があります。パフォーマンスやセキュリティを改善するため、できるだけ早く対処する必要があります。
                    </HealthBody>
                  </Widget>
                </WidgetStack>

                <Widget>
                  <WidgetHeader>
                    <WidgetTitle>クイックドラフト</WidgetTitle>
                    <Collapse />
                  </WidgetHeader>
                  <DraftBody>
                    <FieldLabel>タイトル</FieldLabel>
                    <TitleInput />
                    <FieldLabel>内容</FieldLabel>
                    <DraftArea>アイディアを書き留めてみましょう。</DraftArea>
                    <PrimaryButton>下書き保存</PrimaryButton>
                  </DraftBody>
                </Widget>

                <Widget>
                  <WidgetHeader>
                    <WidgetTitle>WordPress イベントとニュース</WidgetTitle>
                    <Collapse />
                  </WidgetHeader>
                  <Location>
                    お近くの次回のイベントにご参加ください。
                    <Dash name="edit" size={18} color="#0073aa" />
                  </Location>
                  {events.map((ev) => (
                    <EventRow key={ev.title}>
                      <Dash name={ev.icon} size={18} />
                      <EventText>
                        <EventTitle>{ev.title}</EventTitle>
                        Online
                      </EventText>
                      <EventDate>
                        {ev.date}
                        {ev.time && <div>{ev.time}</div>}
                      </EventDate>
                    </EventRow>
                  ))}
                  <NewsList>
                    {news.map((n, i) => (
                      <NewsItem key={i}>{n}</NewsItem>
                    ))}
                  </NewsList>
                  <EventFooter>
                    <FooterLink>勉強会 <Dash name="external" /></FooterLink>
                    <FooterDivider />
                    <FooterLink>WordCamp <Dash name="external" /></FooterLink>
                    <FooterDivider />
                    <FooterLink>ニュース <Dash name="external" /></FooterLink>
                  </EventFooter>
                </Widget>

                <DropZone />
              </WidgetGrid>
            </Content>
          </Body>
        </Main>

        <ScrollTrack>
          <ScrollArrow />
          <ScrollThumb />
          <ScrollArrow $down />
        </ScrollTrack>

        <StatusBubble>dengiken.jp/website/wp-admin/import.php</StatusBubble>
      </Middle>

      <Taskbar>
        <StartCell><FaWindows size={19} /></StartCell>
        <StartCell><TaskView /></StartCell>
        <AppCell $open><FolderLogo /></AppCell>
        <AppCell><FaInternetExplorer size={26} color="#1ebbee" /></AppCell>
        <AppCell $active $open><ChromeLogo /></AppCell>
        <AppCell $open><OfficeLogo letter="P" dark="#d24726" /></AppCell>
        <AppCell $open><PsLogo /></AppCell>
        <AppCell $open><PhotosLogo /></AppCell>
        <AppCell $open><OfficeLogo letter="W" dark="#2b579a" /></AppCell>
        <AppCell $open><OfficeLogo letter="X" dark="#217346" /></AppCell>
        <AppCell $open><PanelLogo /></AppCell>
        <Tray>
          {TrayIcons.map((icon) => (
            <TrayCell key={icon.key}>{icon}</TrayCell>
          ))}
          <Clock>14:52<br />2020/09/05</Clock>
          <Notify>
            <svg viewBox="0 0 20 20" width="20" height="20">
              <path d="M2 2h16v12H9l-3 4v-4H2z" fill="#fff" />
              <path d="M5 5.5h10M5 8h10M5 10.5h6" stroke="#1b2b40" />
            </svg>
            <NotifyBadge>1</NotifyBadge>
          </Notify>
        </Tray>
      </Taskbar>
    </Page>
  );
};

export default App;
